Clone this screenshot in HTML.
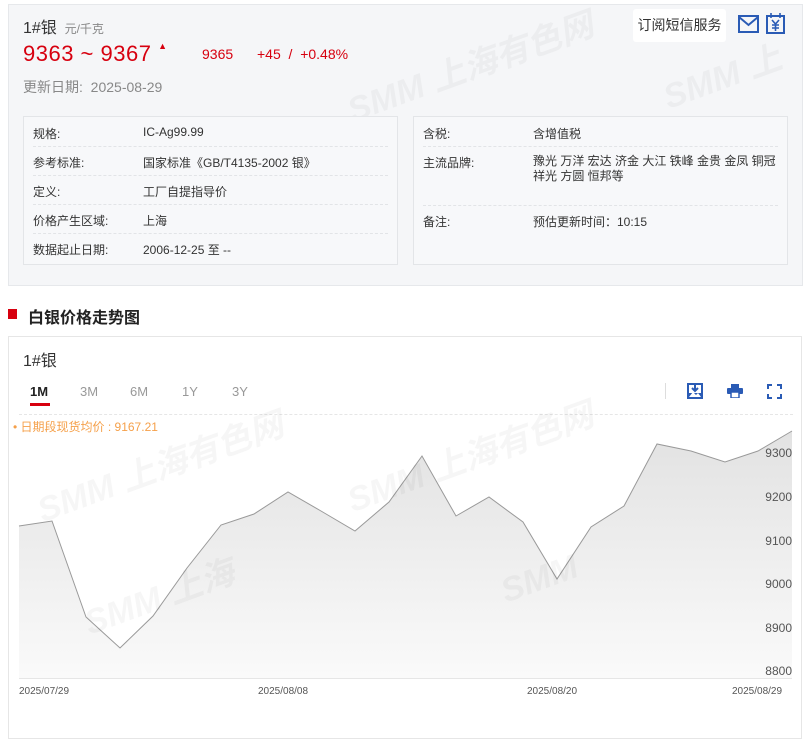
<!DOCTYPE html>
<html><head><meta charset="utf-8">
<style>
*{margin:0;padding:0;box-sizing:border-box}
body{width:804px;height:742px;background:#fff;font-family:"Liberation Sans","Noto Sans CJK SC",sans-serif;position:relative;overflow:hidden;color:#333}
.a{position:absolute;white-space:nowrap}
.top{position:absolute;left:8px;top:4px;width:795px;height:282px;background:#f5f6f8;border:1px solid #e6e8eb}
.box{position:absolute;top:116px;width:375px;height:149px;border:1px solid #e3e5e8;background:#f7f8fa}
.row{position:absolute;left:9px;right:9px;border-bottom:1px dashed #e2e4e7;font-size:12px;color:#333}
.wm{position:absolute;font-weight:bold;font-style:italic;color:rgba(0,0,0,0.035);font-size:34px;transform:rotate(-20deg);white-space:nowrap}
.tab{position:absolute;top:384px;font-size:13px;color:#999}
.yl{position:absolute;font-size:12px;color:#555;right:12px}
.xl{position:absolute;top:686px;font-size:10px;color:#555}
</style></head><body>
<div class="top"></div>
<div class="wm" style="left:340px;top:40px">SMM 上海有色网</div>
<div class="wm" style="left:660px;top:50px">SMM 上</div>
<div class="a" style="left:23px;top:14px;font-size:16px;color:#333">1#银 <span style="font-size:12px;color:#888">&nbsp;元/千克</span></div>
<div class="a" style="left:23px;top:41px;font-size:22px;color:#d7000f;letter-spacing:0.5px">9363 ~ 9367 <span style="font-size:9px;vertical-align:top">▲</span></div>
<div class="a" style="left:202px;top:46px;font-size:14px;color:#d7000f">9365</div>
<div class="a" style="left:257px;top:46px;font-size:14px;color:#d7000f">+45 &nbsp;/ &nbsp;+0.48%</div>
<div class="a" style="left:23px;top:77px;font-size:14px;color:#888">更新日期:&nbsp; 2025-08-29</div>
<div class="a" style="left:633px;top:9px;width:93px;height:33px;background:#fff;border-radius:3px;font-size:14px;line-height:33px;text-align:center;color:#333">订阅短信服务</div>
<svg class="a" style="left:738px;top:15px" width="22" height="19" viewBox="0 0 22 19"><rect x="1" y="1" width="19" height="16" fill="none" stroke="#2a5bb5" stroke-width="2"/><path d="M1 2l9.5 8L20 2" fill="none" stroke="#2a5bb5" stroke-width="2"/></svg>
<svg class="a" style="left:766px;top:13px" width="20" height="22" viewBox="0 0 20 22"><rect x="1" y="3" width="17" height="17" fill="none" stroke="#2a5bb5" stroke-width="2"/><path d="M5 0v5M14 0v5M6 7l3.5 4 3.5-4M9.5 11v7M6 12h7M6 15h7" fill="none" stroke="#2a5bb5" stroke-width="1.6"/></svg>

<div class="box" style="left:23px">
 <div class="row" style="top:0;height:30px"><span class="a" style="left:0;top:8px">规格:</span><span class="a" style="left:110px;top:8px">IC-Ag99.99</span></div>
 <div class="row" style="top:30px;height:29px"><span class="a" style="left:0;top:7px">参考标准:</span><span class="a" style="left:110px;top:7px">国家标准《GB/T4135-2002 银》</span></div>
 <div class="row" style="top:59px;height:29px"><span class="a" style="left:0;top:7px">定义:</span><span class="a" style="left:110px;top:7px">工厂自提指导价</span></div>
 <div class="row" style="top:88px;height:29px"><span class="a" style="left:0;top:7px">价格产生区域:</span><span class="a" style="left:110px;top:7px">上海</span></div>
 <div class="row" style="top:117px;height:29px;border:none"><span class="a" style="left:0;top:7px">数据起止日期:</span><span class="a" style="left:110px;top:7px">2006-12-25 至 --</span></div>
</div>
<div class="box" style="left:413px">
 <div class="row" style="top:0;height:30px"><span class="a" style="left:0;top:8px">含税:</span><span class="a" style="left:110px;top:8px">含增值税</span></div>
 <div class="row" style="top:30px;height:59px"><span class="a" style="left:0;top:7px">主流品牌:</span><span class="a" style="left:110px;top:7px;line-height:15px">豫光 万洋 宏达 济金 大江 铁峰 金贵 金凤 铜冠<br>祥光 方圆 恒邦等</span></div>
 <div class="row" style="top:89px;height:29px;border:none"><span class="a" style="left:0;top:7px">备注:</span><span class="a" style="left:110px;top:7px">预估更新时间：10:15</span></div>
</div>

<div class="a" style="left:8px;top:309px;width:9px;height:10px;background:#d7000f"></div>
<div class="a" style="left:28px;top:304px;font-size:16px;font-weight:bold;color:#222">白银价格走势图</div>

<div class="a" style="left:8px;top:336px;width:794px;height:403px;border:1px solid #e6e6e6;background:#fff"></div>
<div class="a" style="left:23px;top:347px;font-size:16px;color:#333">1#银</div>
<div class="tab" style="left:30px;color:#222;font-weight:bold">1M</div>
<div class="a" style="left:30px;top:403px;width:20px;height:3px;background:#d7000f"></div>
<div class="tab" style="left:80px">3M</div>
<div class="tab" style="left:130px">6M</div>
<div class="tab" style="left:182px">1Y</div>
<div class="tab" style="left:232px">3Y</div>
<div class="a" style="left:665px;top:383px;width:1px;height:16px;background:#ddd"></div>
<svg class="a" style="left:687px;top:383px" width="16" height="16" viewBox="0 0 16 16"><rect x="0" y="0" width="16" height="16" fill="#2a5bb5"/><rect x="2" y="2" width="12" height="8" fill="#fff"/><path d="M8 2v6M5 5l3 3 3-3" stroke="#2a5bb5" stroke-width="2" fill="none"/><path d="M2 14l4-5 3 3 2-2 3 4z" fill="#fff"/></svg>
<svg class="a" style="left:727px;top:384px" width="16" height="14" viewBox="0 0 16 14"><rect x="4" y="0" width="8" height="4" fill="#2a5bb5"/><rect x="0" y="4" width="16" height="6" rx="1" fill="#2a5bb5"/><rect x="4" y="8" width="8" height="6" fill="#fff" stroke="#2a5bb5" stroke-width="1.5"/></svg>
<svg class="a" style="left:767px;top:384px" width="15" height="15" viewBox="0 0 15 15"><path d="M1 5V1h4M10 1h4v4M14 10v4h-4M5 14H1v-4" fill="none" stroke="#2a5bb5" stroke-width="2"/></svg>
<div class="a" style="left:19px;top:414px;width:774px;border-top:1px dashed #e6e6e6"></div>
<div class="a" style="left:13px;top:418px;font-size:12px;color:#f5a04a">• 日期段现货均价 : 9167.21</div>

<svg class="a" style="left:0;top:420px" width="804" height="270" viewBox="0 420 804 270">
<defs><linearGradient id="g" x1="0" y1="0" x2="0" y2="1"><stop offset="0" stop-color="#e2e2e2"/><stop offset="1" stop-color="#fafafa"/></linearGradient></defs>
<polygon fill="url(#g)" points="19,526 52,521 86,617 120,648 153,616 187,568 221,525 254,514 288,492 321,511 355,531 389,502 422,456 456,516 489,497 523,522 557,579 591,527 624,506 657,444 691,451 725,462 758,451 792,431 792,678 19,678"/>
<polyline fill="none" stroke="#999" stroke-width="1" points="19,526 52,521 86,617 120,648 153,616 187,568 221,525 254,514 288,492 321,511 355,531 389,502 422,456 456,516 489,497 523,522 557,579 591,527 624,506 657,444 691,451 725,462 758,451 792,431"/>
<line x1="19" y1="678.5" x2="792" y2="678.5" stroke="#e6e6e6"/>
</svg>
<div class="wm" style="left:30px;top:440px">SMM 上海有色网</div>
<div class="wm" style="left:340px;top:430px">SMM 上海有色网</div>
<div class="wm" style="left:80px;top:570px">SMM 上海</div>
<div class="wm" style="left:500px;top:560px">SMM</div>
<div class="yl" style="top:446px">9300</div>
<div class="yl" style="top:490px">9200</div>
<div class="yl" style="top:534px">9100</div>
<div class="yl" style="top:577px">9000</div>
<div class="yl" style="top:621px">8900</div>
<div class="yl" style="top:664px">8800</div>
<div class="xl" style="left:19px">2025/07/29</div>
<div class="xl" style="left:258px">2025/08/08</div>
<div class="xl" style="left:527px">2025/08/20</div>
<div class="xl" style="left:732px">2025/08/29</div>
</body></html>
